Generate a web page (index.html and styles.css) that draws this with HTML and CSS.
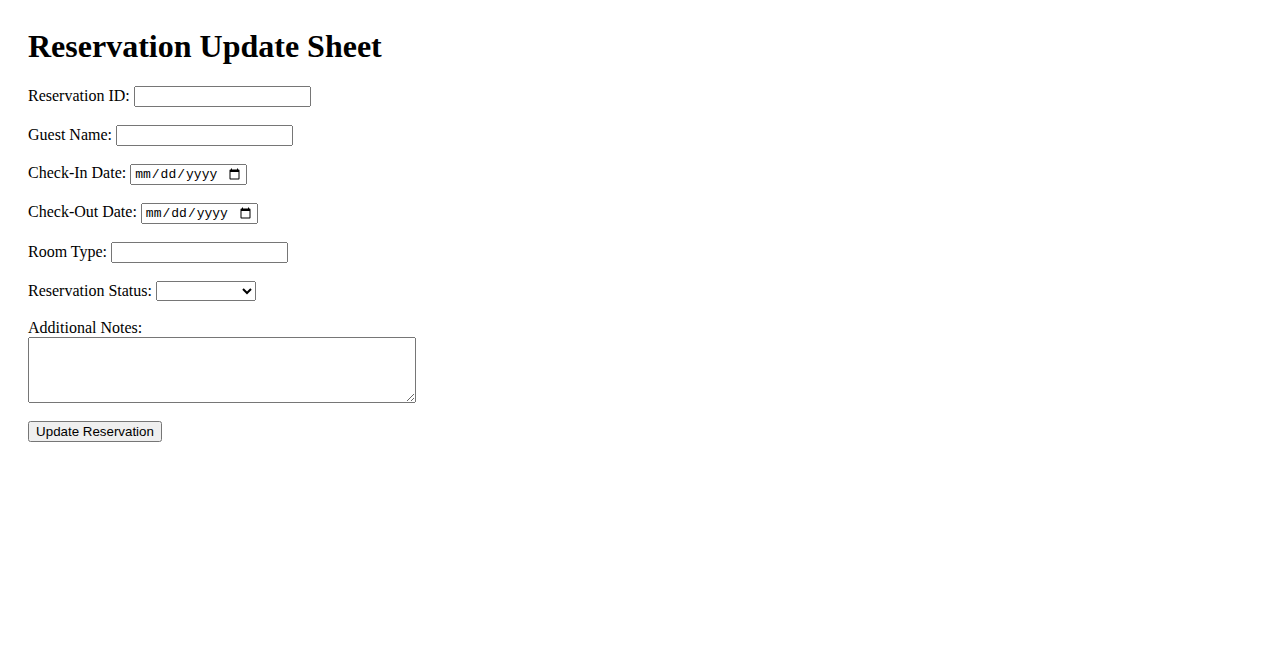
FILE: index.html
```html
<!DOCTYPE html>
<html lang="en">
<head>
    <meta charset="UTF-8">
    <meta name="viewport" content="width=device-width, initial-scale=1.0">
    <title>Reservation Update Sheet</title>
    <link rel="stylesheet" href="styles.css">
</head>
<body>
    <div class="container">
        <h1>Reservation Update Sheet</h1>
        <form id="reservation-form">
            <div class="field">
                <label for="reservation-id">Reservation ID:</label>
                <input type="text" id="reservation-id" name="reservation-id">
            </div>
            <div class="field">
                <label for="guest-name">Guest Name:</label>
                <input type="text" id="guest-name" name="guest-name">
            </div>
            <div class="field">
                <label for="check-in">Check-In Date:</label>
                <input type="date" id="check-in" name="check-in">
            </div>
            <div class="field">
                <label for="check-out">Check-Out Date:</label>
                <input type="date" id="check-out" name="check-out">
            </div>
            <div class="field">
                <label for="room-type">Room Type:</label>
                <input type="text" id="room-type" name="room-type">
            </div>
            <div class="field">
                <label for="status">Reservation Status:</label>
                <select id="status" name="status">
                    <option value=""></option>
                    <option value="confirmed">Confirmed</option>
                    <option value="pending">Pending</option>
                    <option value="cancelled">Cancelled</option>
                </select>
            </div>
            <div class="field notes">
                <label for="notes">Additional Notes:</label><br>
                <textarea id="notes" name="notes" rows="4" cols="50"></textarea>
            </div>
            <button type="submit">Update Reservation</button>
        </form>
    </div>
</body>
</html>
```

FILE: styles.css
```css
body {
    font-family: "Liberation Serif", "Times New Roman", serif;
    font-size: 16px;
    color: #000;
    background: #fff;
}
.container {
    padding: 20px;
}
h1 {
    font-size: 2em;
    margin: 0 0 0.67em;
}
.field {
    margin-bottom: 18px;
}
.field.notes {
    margin-bottom: 14px;
}
input[type="text"] {
    width: 177px;
    height: 21px;
    box-sizing: border-box;
}
input[type="date"] {
    width: 117px;
    height: 21px;
    box-sizing: border-box;
    font-family: "Liberation Mono", monospace;
    font-size: 13px;
    padding: 1px 2px;
}
select {
    width: 100px;
    height: 20px;
    box-sizing: border-box;
}
textarea {
    width: 388px;
    height: 66px;
    box-sizing: border-box;
}
button {
    font-family: "Liberation Sans", Arial, sans-serif;
    font-size: 13.33px;
    width: 134px;
    height: 21px;
    box-sizing: border-box;
}
```
